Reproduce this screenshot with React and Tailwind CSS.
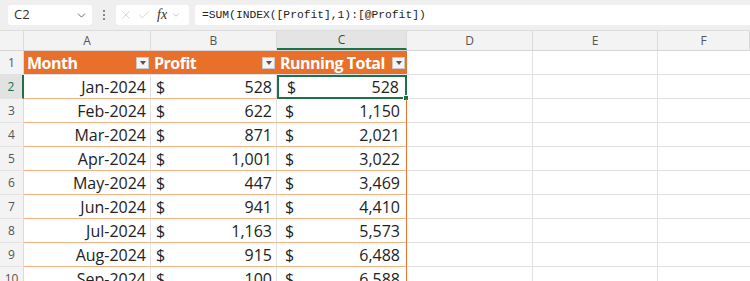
import { ChevronDown, X, Check } from "lucide-react";

const rows = [
  ["Jan-2024", "528", "528"],
  ["Feb-2024", "622", "1,150"],
  ["Mar-2024", "871", "2,021"],
  ["Apr-2024", "1,001", "3,022"],
  ["May-2024", "447", "3,469"],
  ["Jun-2024", "941", "4,410"],
  ["Jul-2024", "1,163", "5,573"],
  ["Aug-2024", "915", "6,488"],
  ["Sep-2024", "100", "6,588"],
];

const cols = ["A", "B", "C", "D", "E", "F"];
const widths = ["w-[127px]", "w-[126px]", "w-[130px]", "w-[126px]", "w-[125px]", "flex-1"];

function FilterButton() {
  return (
    <div className="w-[13px] h-[12px] bg-[#f4f4f4] border border-[#c9c9c9] flex items-center justify-center shrink-0">
      <div className="w-0 h-0 border-l-[3px] border-r-[3px] border-t-[4px] border-l-transparent border-r-transparent border-t-[#555]" />
    </div>
  );
}

export default function App() {
  return (
    <div className="w-[750px] h-[281px] overflow-hidden bg-white font-['Open_Sans',sans-serif] text-[#222]">
      {/* formula bar */}
      <div className="h-[31px] bg-[#efefef] flex items-center pl-[8px] gap-[6px] border-b border-[#dcdcdc]">
        <div className="w-[84px] h-[20px] bg-white rounded-[3px] flex items-center justify-between pl-[6px] pr-[4px]">
          <span className="text-[13px] text-[#333]">C2</span>
          <ChevronDown size={13} strokeWidth={1.6} className="text-[#555]" />
        </div>
        <div className="w-[12px] flex flex-col items-center gap-[2px]">
          <div className="w-[2px] h-[2px] bg-[#666] rounded-full" />
          <div className="w-[2px] h-[2px] bg-[#666] rounded-full" />
          <div className="w-[2px] h-[2px] bg-[#666] rounded-full" />
        </div>
        <div className="w-[73px] h-[20px] bg-white rounded-[3px] flex items-center gap-[4px] pl-[3px]">
          <X size={14} strokeWidth={1} className="text-[#bbb]" />
          <Check size={14} strokeWidth={1} className="text-[#bbb]" />
          <span className="font-['Liberation_Serif',serif] italic text-[14px] text-[#333] ml-[2px] leading-none">fx</span>
          <ChevronDown size={10} strokeWidth={1.4} className="text-[#999]" />
        </div>
        <div className="flex-1 h-[20px] bg-white rounded-l-[3px] flex items-center pl-[7px]">
          <span className="font-['Liberation_Mono',monospace] text-[11.3px] text-[#222]">
            =SUM(INDEX([Profit],1):[@Profit])
          </span>
        </div>
      </div>

      {/* column headers */}
      <div className="h-[20px] flex bg-[#f3f3f3] border-b border-[#d6d6d6] text-[12px] text-[#555]">
        <div className="w-[24px] border-r border-[#dadada]" />
        {cols.map((c, i) => (
          <div
            key={c}
            className={`${widths[i]} flex items-center justify-center border-r border-[#dadada] ${
              c === "C" ? "bg-[#e4e4e4] border-b-2 border-b-[#1e7145] text-[#1e5c3a]" : ""
            }`}
          >
            {c}
          </div>
        ))}
      </div>

      {/* header row 1 */}
      <div className="h-[24px] flex border-b border-[#e2e2e2]">
        <div className="w-[24px] bg-[#f3f3f3] border-r border-[#dadada] flex items-center justify-center text-[12px] text-[#555]">
          1
        </div>
        <div className="w-[383px] bg-[#e8702a] flex text-white font-bold text-[16px]">
          {["Month", "Profit", "Running Total"].map((h, i) => (
            <div
              key={h}
              className={`${i === 2 ? "w-[130px]" : i === 0 ? "w-[127px]" : "w-[126px]"} flex items-center justify-between pl-[3px] pr-[2px] whitespace-nowrap overflow-hidden`}
            >
              <span className="leading-none tracking-[-0.5px]">{h}</span>
              <FilterButton />
            </div>
          ))}
        </div>
        <div className="w-[126px] border-r border-[#e2e2e2]" />
        <div className="w-[125px] border-r border-[#e2e2e2]" />
        <div className="flex-1" />
      </div>

      {/* data rows */}
      {rows.map((r, idx) => {
        const n = idx + 2;
        const sel = n === 2;
        return (
          <div key={n} className="h-[24px] flex">
            <div
              className={`w-[24px] flex items-center justify-center text-[12px] border-b border-[#e2e2e2] ${
                sel ? "bg-[#e2e2e2] text-[#1e7145] border-r-2 border-r-[#1e7145]" : "bg-[#f3f3f3] text-[#555] border-r border-r-[#dadada]"
              }`}
            >
              {n}
            </div>
            <div className="w-[127px] border-b border-[#f4b183] border-r border-r-[#e2e2e2] flex items-center justify-end pr-[4px] text-[16px]">
              {r[0]}
            </div>
            <div className="w-[126px] border-b border-[#f4b183] border-r border-r-[#e2e2e2] flex items-center justify-between pl-[5px] pr-[4px] text-[16px]">
              <span>$</span>
              <span>{r[1]}</span>
            </div>
            <div
              className={`w-[130px] relative flex items-center justify-between pl-[8px] pr-[6px] text-[16px] ${
                sel ? "border-2 border-[#1e7145]" : "border-b border-[#f4b183] border-r border-r-[#e8702a]"
              }`}
            >
              <span>$</span>
              <span>{r[2]}</span>
              {sel && <div className="absolute -right-[4px] -bottom-[4px] w-[6px] h-[6px] bg-[#1e7145] border border-white" />}
            </div>
            <div className="w-[126px] border-b border-r border-[#e2e2e2]" />
            <div className="w-[125px] border-b border-r border-[#e2e2e2]" />
            <div className="flex-1 border-b border-[#e2e2e2]" />
          </div>
        );
      })}
    </div>
  );
}
